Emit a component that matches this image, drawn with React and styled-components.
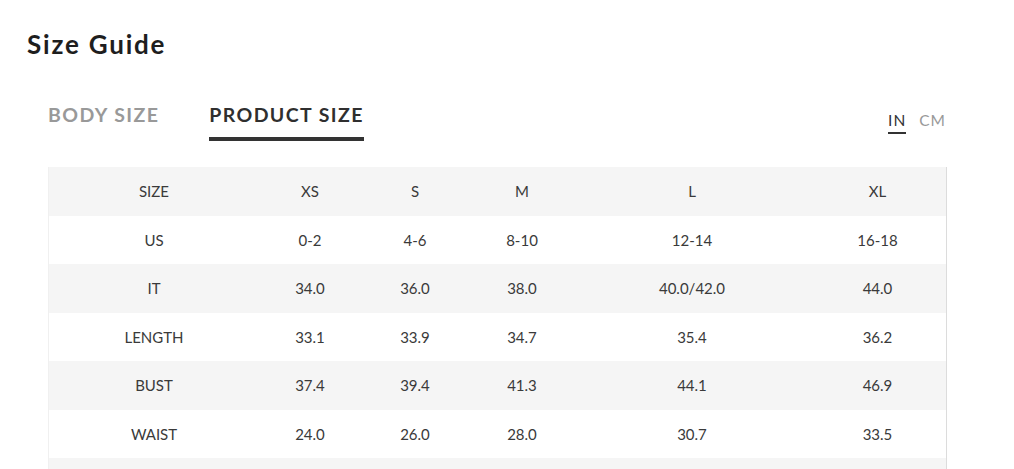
import React, { useState } from "react";
import styled, { createGlobalStyle } from "styled-components";

const Global = createGlobalStyle`
  html, body { margin: 0; padding: 0; background: #fff; }
  body { font-family: Lato, "Noto Sans", sans-serif; color: #333; }
`;

const Page = styled.div`
  padding: 29px 0 0 27px;
  width: 1014px;
  box-sizing: border-box;
`;

const Title = styled.h1`
  margin: 0;
  font-family: Lato, sans-serif;
  font-weight: 700;
  font-size: 26px;
  line-height: 30px;
  color: #1e1e1e;
  letter-spacing: 1.8px;
`;

const Body = styled.div`
  margin-left: 21px;
  width: 899px;
`;

const TopBar = styled.div`
  display: flex;
  align-items: flex-start;
  justify-content: space-between;
  margin-top: 44px;
  height: 64px;
`;

const Tabs = styled.div`
  display: flex;
  gap: 50px;
`;

const Tab = styled.button`
  border: none;
  background: none;
  padding: 0;
  font-family: Lato, sans-serif;
  font-weight: 700;
  font-size: 19.5px;
  line-height: 24px;
  letter-spacing: 1.4px;
  color: ${(p) => (p.$active ? "#2f2f2f" : "#999")};
  cursor: pointer;
  display: flex;
  flex-direction: column;
  align-items: stretch;
  &::after {
    content: "";
    display: block;
    height: 4px;
    margin-top: 10px;
    background: ${(p) => (p.$active ? "#333" : "transparent")};
  }
`;

const Units = styled.div`
  display: flex;
  gap: 13px;
  margin-top: 8px;
  margin-right: 1px;
`;

const Unit = styled.button`
  border: none;
  background: none;
  padding: 0 0 3px;
  font-family: Lato, sans-serif;
  font-size: 15.5px;
  line-height: 18px;
  letter-spacing: 1px;
  color: ${(p) => (p.$active ? "#333" : "#999")};
  border-bottom: 2px solid ${(p) => (p.$active ? "#333" : "transparent")};
  cursor: pointer;
`;

const Table = styled.div`
  display: grid;
  grid-template-columns: 210px 102px 108px 106px 234px 137px;
  border-left: 1px solid #f0f0f0;
  border-right: 1px solid #dcdcdc;
`;

const Cell = styled.div`
  height: 48.5px;
  display: flex;
  align-items: center;
  justify-content: center;
  font-family: Lato, sans-serif;
  font-size: 15px;
  color: #3a3a3a;
  background: ${(p) => (p.$shaded ? "#f5f5f5" : "#fff")};
`;

const rows = [
  ["SIZE", "XS", "S", "M", "L", "XL"],
  ["US", "0-2", "4-6", "8-10", "12-14", "16-18"],
  ["IT", "34.0", "36.0", "38.0", "40.0/42.0", "44.0"],
  ["LENGTH", "33.1", "33.9", "34.7", "35.4", "36.2"],
  ["BUST", "37.4", "39.4", "41.3", "44.1", "46.9"],
  ["WAIST", "24.0", "26.0", "28.0", "30.7", "33.5"],
  ["", "", "", "", "", ""],
];

export default function App() {
  const [tab, setTab] = useState("product");
  const [unit, setUnit] = useState("in");
  return (
    <Page>
      <Global />
      <Title>Size Guide</Title>
      <Body>
        <TopBar>
          <Tabs>
            <Tab $active={tab === "body"} onClick={() => setTab("body")}>BODY SIZE</Tab>
            <Tab $active={tab === "product"} onClick={() => setTab("product")}>PRODUCT SIZE</Tab>
          </Tabs>
          <Units>
            <Unit $active={unit === "in"} onClick={() => setUnit("in")}>IN</Unit>
            <Unit $active={unit === "cm"} onClick={() => setUnit("cm")}>CM</Unit>
          </Units>
        </TopBar>
        <Table>
          {rows.map((r, i) =>
            r.map((c, j) => (
              <Cell key={`${i}-${j}`} $shaded={i % 2 === 0}>{c}</Cell>
            ))
          )}
        </Table>
      </Body>
    </Page>
  );
}
